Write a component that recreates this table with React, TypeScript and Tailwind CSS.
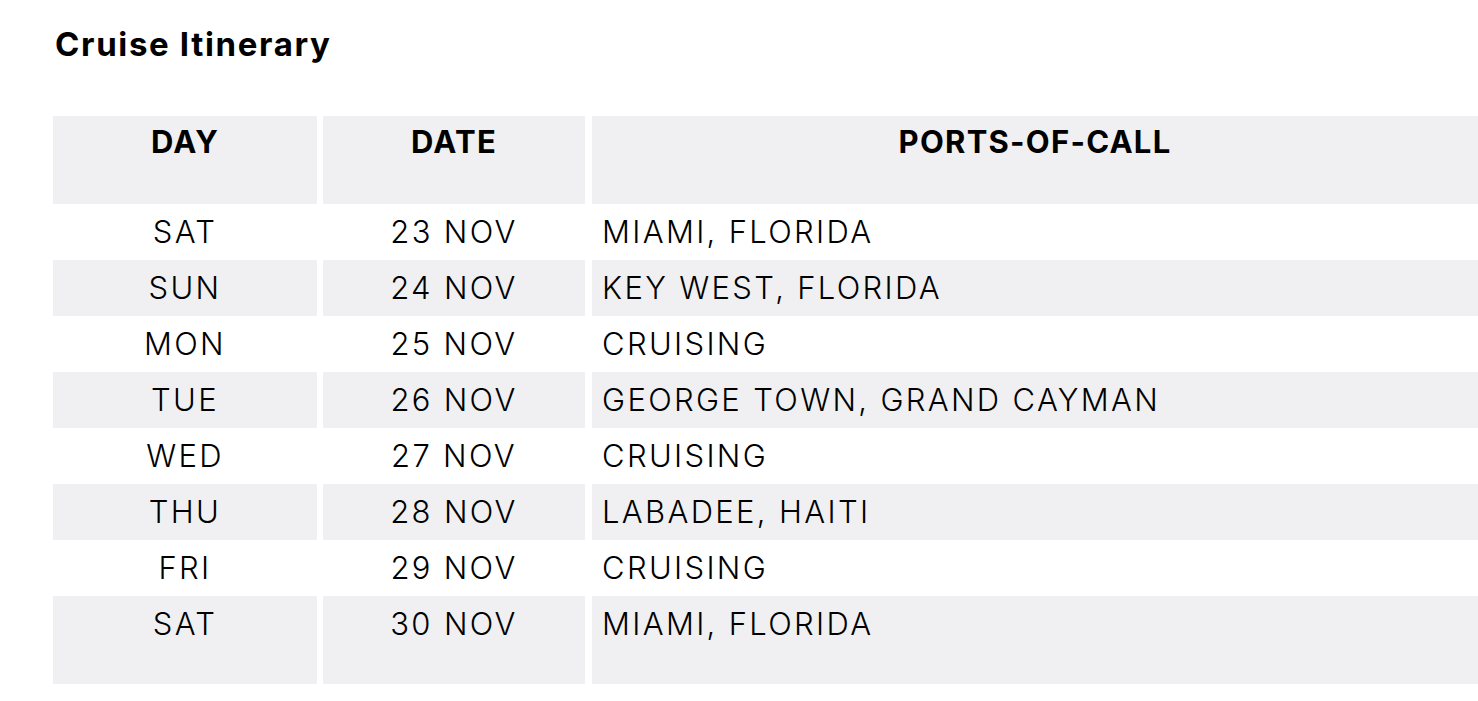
const rows = [
  { day: 'SAT', date: '23 NOV', port: 'MIAMI, FLORIDA' },
  { day: 'SUN', date: '24 NOV', port: 'KEY WEST, FLORIDA' },
  { day: 'MON', date: '25 NOV', port: 'CRUISING' },
  { day: 'TUE', date: '26 NOV', port: 'GEORGE TOWN, GRAND CAYMAN' },
  { day: 'WED', date: '27 NOV', port: 'CRUISING' },
  { day: 'THU', date: '28 NOV', port: 'LABADEE, HAITI' },
  { day: 'FRI', date: '29 NOV', port: 'CRUISING' },
  { day: 'SAT', date: '30 NOV', port: 'MIAMI, FLORIDA' },
];

export default function App() {
  return (
    <div className="min-h-screen bg-white pl-[53px] pt-[22px] text-black font-['Inter',sans-serif] overflow-hidden">
      <h1 className="text-[33px] leading-[44px] font-bold tracking-[0.05em] pl-[2px]">Cruise Itinerary</h1>

      <div className="mt-[50px] grid grid-cols-[264px_263px_886px] gap-x-[6px] text-[31px]">
        {/* Header */}
        <div className="bg-[#f0f0f2] h-[88px] pt-[6px] text-center font-bold leading-[40px] tracking-[0.04em]">DAY</div>
        <div className="bg-[#f0f0f2] h-[88px] pt-[6px] text-center font-bold leading-[40px] tracking-[0.04em] mr-px">DATE</div>
        <div className="bg-[#f0f0f2] h-[88px] pt-[6px] text-center font-bold leading-[40px] tracking-[0.04em]">PORTS-OF-CALL</div>

        {rows.map((r, i) => {
          const shaded = i % 2 === 1;
          const last = i === rows.length - 1;
          const cell = `${shaded ? 'bg-[#f0f0f2]' : 'bg-white'} ${last ? 'h-[88px]' : 'h-[56px]'} leading-[56px] font-light tracking-[0.075em]`;
          return [
            <div key={`d${i}`} className={`${cell} text-center`}>{r.day}</div>,
            <div key={`t${i}`} className={`${cell} text-center mr-px`}>{r.date}</div>,
            <div key={`p${i}`} className={`${cell} pl-[10px]`}>{r.port}</div>,
          ];
        })}
      </div>
    </div>
  );
}
